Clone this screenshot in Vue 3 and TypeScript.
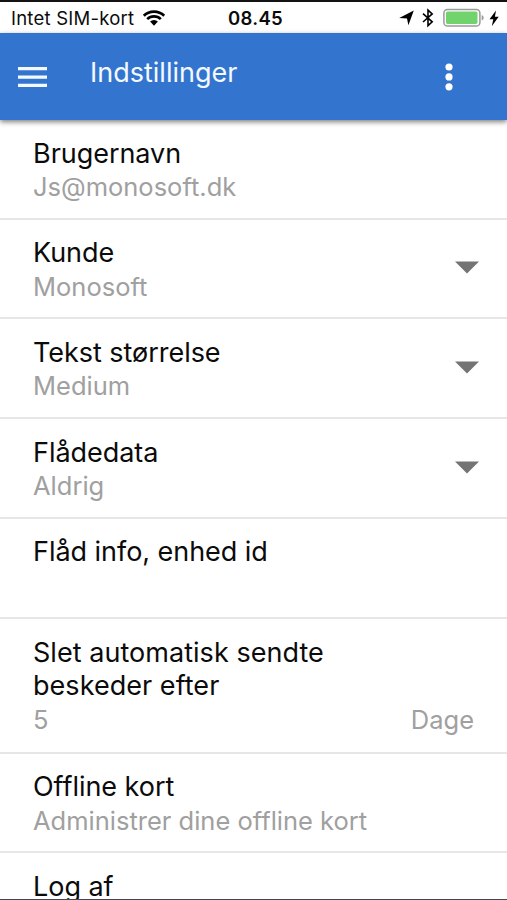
<script setup lang="ts">
interface Setting {
  id: string
  lines: string[]
  value: string
  unit?: string
  dropdown?: boolean
}

const settings: Setting[] = [
  { id: 'user', lines: ['Brugernavn'], value: 'Js@monosoft.dk' },
  { id: 'customer', lines: ['Kunde'], value: 'Monosoft', dropdown: true },
  { id: 'textsize', lines: ['Tekst størrelse'], value: 'Medium', dropdown: true },
  { id: 'fleet', lines: ['Flådedata'], value: 'Aldrig', dropdown: true },
  { id: 'unit', lines: ['Flåd info, enhed id'], value: '' },
  { id: 'cleanup', lines: ['Slet automatisk sendte', 'beskeder efter'], value: '5', unit: 'Dage' },
  { id: 'offline', lines: ['Offline kort'], value: 'Administrer dine offline kort' },
  { id: 'logout', lines: ['Log af'], value: '' },
]
</script>

<template>
  <div class="screen">
    <div class="status">
      <div class="carrier">
        <span>Intet SIM-kort</span>
        <svg class="wifi" width="24" height="18" viewBox="0 0 24 18">
          <path d="M1.8 6.7a14.6 14.6 0 0 1 20.4 0" />
          <path d="M5.2 10.1a9.8 9.8 0 0 1 13.6 0" />
          <path class="solid" d="M8.1 12.6a5.6 5.6 0 0 1 7.8 0L12 16.7z" />
        </svg>
      </div>
      <span class="clock">08.45</span>
      <div class="indicators">
        <svg width="15" height="16" viewBox="0 0 15 16">
          <path d="M14.8 .6 9.4 15.2 8 8.6 .2 8z" />
        </svg>
        <svg class="bluetooth" width="12" height="20" viewBox="0 0 12 20">
          <path d="M1 5.7 10.2 13.8 6 17.6V2.1l4.2 3.8L1 14" />
        </svg>
        <svg class="battery" width="41" height="20" viewBox="0 0 41 20">
          <rect class="case" x=".9" y="1.4" width="36" height="16.7" rx="3.6" />
          <rect class="charge" x="3" y="3.5" width="31.5" height="12.4" rx="1.6" />
          <path class="tip" d="M38.7 7q2 .6 2 2.8t-2 2.8z" />
        </svg>
        <svg class="bolt" width="10" height="17" viewBox="0 0 10 17">
          <path d="M7 .5.5 9.2h3.8L2.8 16.2 9.7 6.8H5.9z" />
        </svg>
      </div>
    </div>
    <header class="bar">
      <svg class="menu" width="29" height="20" viewBox="0 0 29 20">
        <path d="M0 1.6h29M0 10.2h29M0 18.4h29" />
      </svg>
      <h1>Indstillinger</h1>
      <svg class="more" width="8" height="28" viewBox="0 0 8 28">
        <circle cx="4" cy="4" r="3.6" />
        <circle cx="4" cy="13.9" r="3.6" />
        <circle cx="4" cy="23.8" r="3.6" />
      </svg>
    </header>
    <main class="list">
      <section v-for="s in settings" :key="s.id" class="row" :class="s.id">
        <div class="copy">
          <div v-for="line in s.lines" :key="line" class="title"><span>{{ line }}</span></div>
          <div class="value">
            <span>{{ s.value }}</span>
            <span v-if="s.unit" class="suffix">{{ s.unit }}</span>
          </div>
        </div>
        <svg v-if="s.dropdown" class="arrow" width="24" height="13" viewBox="0 0 24 13">
          <path d="M0 .5h24L12 12.5z" />
        </svg>
      </section>
    </main>
  </div>
</template>

<style>
body {
  margin: 0;
  overflow: hidden;
}
</style>

<style scoped>
.screen {
  box-sizing: border-box;
  width: 507px;
  height: 900px;
  display: flex;
  flex-direction: column;
  overflow: hidden;
  background: #fff;
  border-top: 2px solid #141112;
  border-bottom: 1px solid #48484a;
  font-family: Inter, "Liberation Sans", sans-serif;
  color: #0b0b0b;
}
.status {
  flex: none;
  height: 31px;
  display: grid;
  grid-template-columns: 1fr auto 1fr;
  align-items: center;
  box-sizing: border-box;
  padding: 1px 8px 0 11px;
  font-size: 18.5px;
}
.carrier {
  display: flex;
  align-items: center;
  gap: 8px;
  letter-spacing: 0.23px;
  white-space: nowrap;
}
.wifi path {
  fill: none;
  stroke: #000;
  stroke-width: 2.7;
}
.wifi .solid {
  fill: #000;
  stroke: none;
}
.clock {
  margin-left: 1px;
  font-weight: 600;
  letter-spacing: 0.3px;
}
.indicators {
  display: flex;
  justify-content: flex-end;
  align-items: center;
}
.bluetooth {
  margin-left: 8px;
  fill: none;
  stroke: #000;
  stroke-width: 1.6;
}
.battery {
  margin-left: 9px;
}
.case {
  fill: #fff;
  stroke: #9a9a9a;
  stroke-width: 1.5;
}
.charge {
  fill: #70d36b;
}
.tip {
  fill: #9a9a9a;
}
.bolt {
  margin-left: 5px;
}
.bar {
  flex: none;
  position: relative;
  z-index: 1;
  height: 87px;
  display: flex;
  align-items: center;
  box-sizing: border-box;
  padding: 0 54px 0 18px;
  background: #3375ce;
  box-shadow: 0 2px 5px rgba(0, 0, 0, 0.5);
  color: #f4f9ff;
}
.menu {
  stroke: #f4f9ff;
  stroke-width: 3.2;
}
h1 {
  flex: 1;
  margin: 0 0 7px 43px;
  font-size: 27px;
  font-weight: 400;
  line-height: 34px;
}
.more {
  fill: #fff;
}
.list {
  flex: 1;
  min-height: 0;
  overflow: hidden;
}
.row {
  box-sizing: border-box;
  display: flex;
  justify-content: space-between;
  min-height: 99.7px;
  padding: 16.5px 28px 14px 33px;
  border-bottom: 2px solid #e6e6e6;
}
.unit {
  min-height: 100.6px;
}
.cleanup {
  min-height: 134.2px;
}
.copy {
  flex: 1;
}
.title,
.value {
  height: 33.6px;
  font-size: 27px;
  letter-spacing: -0.04px;
  line-height: 33.6px;
  white-space: nowrap;
}
.value {
  display: flex;
  justify-content: space-between;
  font-size: 25.5px;
  letter-spacing: 0;
  color: #a0a0a0;
}
.cleanup .title {
  letter-spacing: 0.04px;
}
.suffix {
  margin-right: 5px;
}
.arrow {
  margin-top: 25px;
  fill: #747474;
}
</style>
